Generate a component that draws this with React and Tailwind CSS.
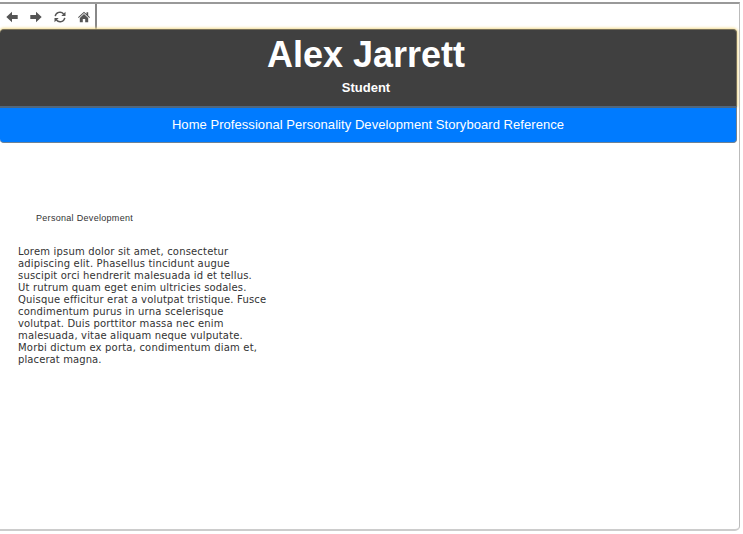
const lines = [
  ["Lorem ipsum dolor sit amet, consectetur", "tracking-[0.18px]"],
  ["adipiscing elit. Phasellus tincidunt augue", "tracking-[0.17px]"],
  ["suscipit orci hendrerit malesuada id et tellus.", "tracking-[0.17px]"],
  ["Ut rutrum quam eget enim ultricies sodales.", "tracking-[0.16px]"],
  ["Quisque efficitur erat a volutpat tristique. Fusce", "tracking-[0.17px]"],
  ["condimentum purus in urna scelerisque", "tracking-[0.18px]"],
  ["volutpat. Duis porttitor massa nec enim", "tracking-[0.16px]"],
  ["malesuada, vitae aliquam neque vulputate.", "tracking-[0.16px]"],
  ["Morbi dictum ex porta, condimentum diam et,", "tracking-[0.19px]"],
  ["placerat magna.", "tracking-[0.1px]"],
];

function Toolbar() {
  return (
    <div className="flex h-[25px] w-[97px] items-center gap-3 border-r-2 border-[#888] pl-[6px] text-[#555]">
      <svg className="h-3 w-3" viewBox="0 0 12 12" fill="currentColor"><path d="M.3 6 6 .8V4h5.7v4H6v3.2z" /></svg>
      <svg className="h-3 w-3" viewBox="0 0 12 12" fill="currentColor"><path d="M11.7 6 6 .8V4H.3v4H6v3.2z" /></svg>
      <svg className="h-3 w-3" viewBox="0 0 12 12" fill="none" stroke="currentColor" strokeWidth="1.4"><path d="M1.2 5.2A4.8 4.8 0 0 1 9.6 3M10.8 6.8A4.8 4.8 0 0 1 2.4 9" /><path d="M11.5.8V5H7.3zM.5 11.2V7h4.2z" fill="currentColor" stroke="none" /></svg>
      <svg className="h-3 w-3" viewBox="0 0 12 12" fill="currentColor"><path d="M6 .7 8.5 3V1.3h1.7v3.2L12 6.2l-.7.7L6 2 .7 6.9 0 6.2z" /><path d="M6 3.1 10.2 7v4.3H7.2V8H4.8v3.3h-3V7z" /></svg>
    </div>
  );
}

export default function App() {
  return (
    <div className="h-[534px] w-[743px] overflow-hidden bg-white font-['Liberation_Sans',Arial,sans-serif]">
      <div className="h-[2px]" />
      <div className="h-[529px] w-[740px] rounded-br-[5px] border-r border-b-2 border-t-2 border-r-[#bbb] border-b-[#ccc] border-t-[#999]">
        <Toolbar />
        <header className="flex h-[77px] w-[737px] flex-col items-center rounded-t-[4px] border border-b-0 border-l-0 border-[#77705a] bg-[#404040] pr-1 text-white shadow-[0_0_3px_1px_#f3dc91]">
          <h1 className="mt-[5px] text-[36px] leading-[40px] font-bold">Alex Jarrett</h1>
          <p className="mt-[5px] text-[13px] leading-[16px] font-bold">Student</p>
        </header>
        <nav className="relative flex h-[37px] w-[737px] justify-center rounded-b-[4px] border border-l-0 border-t-2 border-[#6f8294] border-t-[#50677e] bg-[#007bff] pt-[8px] text-[13px] leading-[18px] tracking-[0.055px] whitespace-pre text-white">
          <span>Home Professional Personality Development Storyboard Reference</span>
        </nav>
        <main className="pt-[69px] text-[#333]">
          <h2 className="pl-[36px] text-[9px] leading-[12px] tracking-[0.3px]">Personal Development</h2>
          <div className="mt-[22px] pl-[18px] font-['DejaVu_Sans',sans-serif] text-[10px] leading-[12px] whitespace-nowrap">
            {lines.map(([text, spacing]) => <p key={text} className={spacing}>{text}</p>)}
          </div>
        </main>
      </div>
    </div>
  );
}
